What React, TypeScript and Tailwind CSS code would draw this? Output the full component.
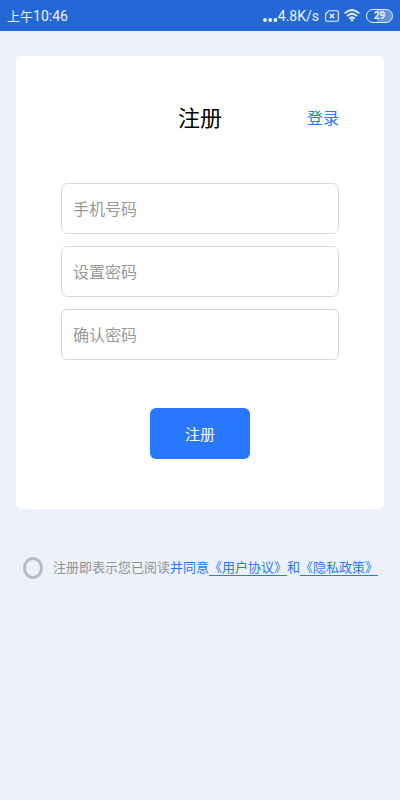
import React from "react";

const fields = [
  { id: "phone", type: "tel", label: "手机号码" },
  { id: "password", type: "password", label: "设置密码" },
  { id: "confirm", type: "password", label: "确认密码" },
];

function StatusBar() {
  return (
    <header className="flex h-[31px] items-center justify-between bg-[#2468d8] px-[7px] pt-[2px] text-[#eef4ff]">
      <div className="flex items-center">
        <span className="text-[13px]">上午</span>
        <span className="text-[14px]">10:46</span>
      </div>
      <div className="flex items-center">
        <svg className="mt-[7px] h-1 w-[15px]" viewBox="0 0 15 4" fill="currentColor">
          <circle cx="2" cy="2" r="1.9" />
          <circle cx="7.2" cy="2" r="1.9" />
          <circle cx="12.4" cy="2" r="1.9" />
        </svg>
        <span className="text-[14px]">4.8K/s</span>
        {/* no sim */}
        <svg
          className="mb-[2px] ml-[6px] h-3 w-[14px]"
          viewBox="0 0 14 12"
          fill="none"
          stroke="currentColor"
          strokeWidth="1.1"
          strokeLinejoin="round"
        >
          <path d="M4 .7h8.2q1.1 0 1.1 1.1v8.4q0 1.1-1.1 1.1H1.8Q.7 11.3.7 10.2V4z" />
          <path d="M4.8 3.8l4.4 4.4M9.2 3.8l-4.4 4.4" strokeWidth="1.4" />
        </svg>
        <svg
          className="mb-[2px] ml-[5px] h-[13px] w-4"
          viewBox="0 0 16 13"
          fill="none"
          stroke="currentColor"
          strokeWidth="1.9"
        >
          <path d="M.7 4.4Q8-2.4 15.3 4.4" />
          <path d="M3.1 7.1Q8 2.6 12.9 7.1" />
          <path d="M5.4 9.7Q8 7.3 10.6 9.7" />
          <path d="M6.3 11L8 12.9 9.7 11Q8 9.6 6.3 11z" fill="currentColor" stroke="none" />
        </svg>
        <span className="mb-[2px] ml-[6px] flex h-[14px] w-[27px] items-center justify-center rounded-full border border-[#eef4ff] bg-linear-to-r from-[#2468d8] from-40% to-[#6093e4] to-40% p-px text-[10px] leading-none font-bold">
          29
        </span>
      </div>
    </header>
  );
}

export default function App() {
  return (
    <div className="min-h-screen bg-[#ecf1fb] font-[Roboto,'Noto_Sans_CJK_SC',sans-serif]">
      <StatusBar />

      <main className="px-4 pt-[25px]">
        <form
          className="rounded-md bg-white px-[45px] pt-[47px] pb-[50px]"
          onSubmit={(e) => e.preventDefault()}
        >
          <div className="grid grid-cols-3 items-center">
            <h1 className="col-start-2 text-center text-[22px] leading-8 text-black">
              注册
            </h1>
            <a href="#login" className="text-right text-base text-[#2878ff]">
              登录
            </a>
          </div>

          <div className="mt-12 flex flex-col gap-3">
            {fields.map((f) => (
              <input
                key={f.id}
                id={f.id}
                type={f.type}
                placeholder={f.label}
                aria-label={f.label}
                className="h-[51px] w-full rounded-md border border-[#d8d8d8] px-[11px] pt-[2px] text-base text-gray-800 outline-none placeholder:text-[#999999]"
              />
            ))}
          </div>

          <button
            type="submit"
            className="mx-auto mt-12 block h-[51px] w-[100px] rounded-md bg-[#2878ff] pt-[3px] text-[15px] text-white"
          >
            注册
          </button>
        </form>
      </main>

      <div className="mt-12 flex items-center pl-[23px] text-[13px] leading-5 whitespace-nowrap text-[#2878ff]">
        <input
          id="agree"
          type="checkbox"
          className="h-[22px] w-5 shrink-0 appearance-none rounded-[50%] border-3 border-[#bbbbbb] checked:bg-[#2878ff]"
        />
        <label htmlFor="agree" className="ml-[10px] flex items-baseline">
          <span className="text-[#929292]">注册即表示您已阅读</span>
          <span>并同意</span>
          <a href="#terms" className="border-b border-[#2878ff] leading-[15px]">
            《用户协议》
          </a>
          <span>和</span>
          <a href="#privacy" className="border-b border-[#2878ff] leading-[15px]">
            《隐私政策》
          </a>
        </label>
      </div>
    </div>
  );
}
